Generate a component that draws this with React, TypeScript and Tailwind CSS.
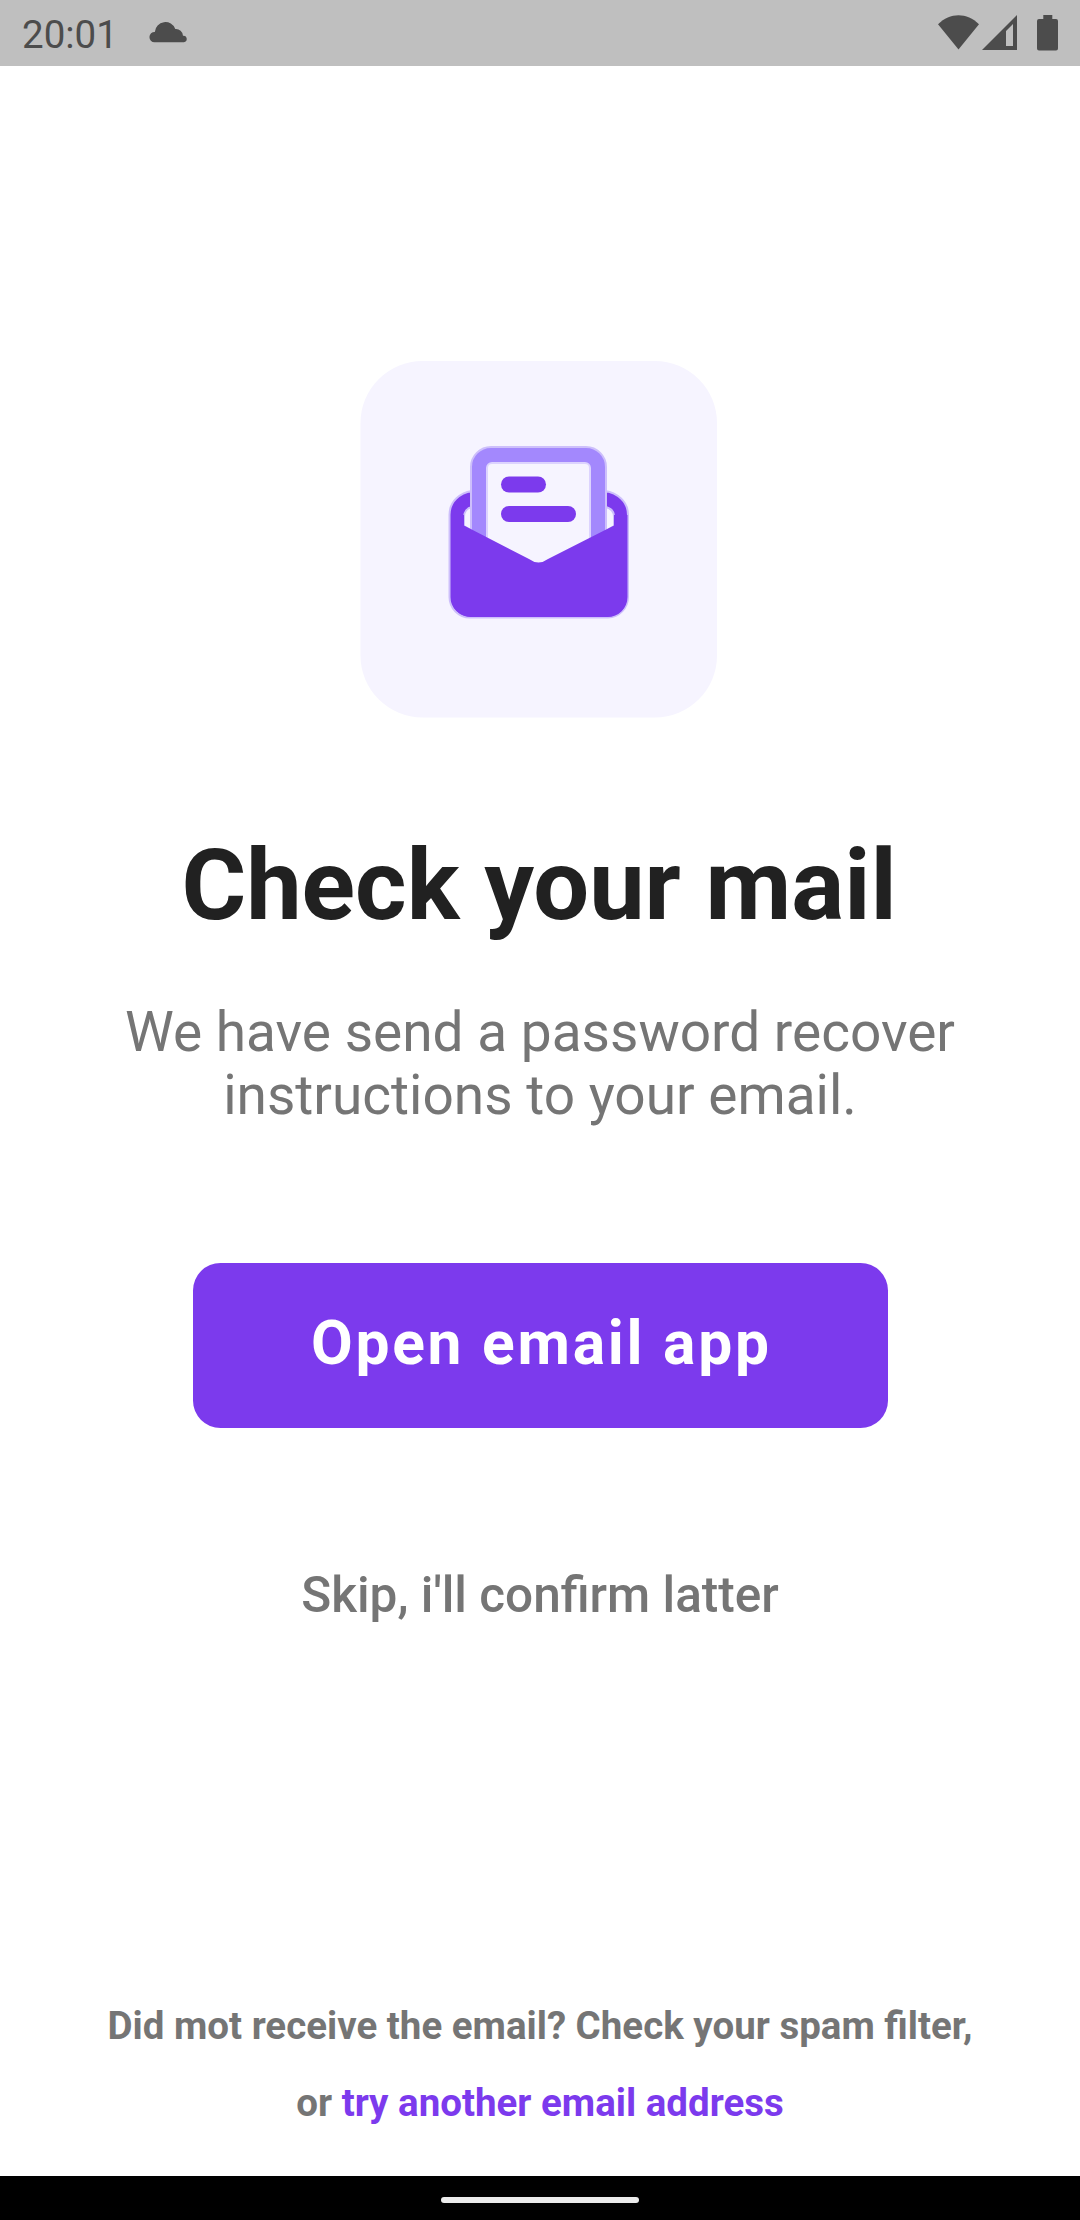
import React from "react";

function StatusBar() {
  return (
    <header className="flex h-[66px] w-full items-center bg-[#bfbfbf] text-[#4c4c4c]">
      <span className="ml-[22px] pt-[4px] text-[38.5px] leading-[66px]">20:01</span>
      <svg className="ml-auto h-[66px] w-[940px] shrink-0" viewBox="140 0 940 66" fill="currentColor">
        <path d="M154.500 42.300a5.200 5.200 0 0 1 .300-10.400A10.600 10.600 0 0 1 175.300 29a7 7 0 0 1 7.700 6.700A3.300 3.300 0 0 1 183.800 42.300Z" />
        <path d="M958.500 49.500 938 24.300C950 12.200 967 12.200 979 24.300Z" />
        <path fillRule="evenodd" d="M982 50 1017 15V50ZM1006 31V46H1013V24Z" />
        <path d="M1043.300 15h9v4h3.700a2 2 0 0 1 2 2v27.500a2 2 0 0 1-2 2h-17a2 2 0 0 1-2-2V21a2 2 0 0 1 2-2h4.300Z" />
      </svg>
    </header>
  );
}

function MailTile() {
  return (
    <svg className="h-[358px] w-[358px] shrink-0" viewBox="360 361 358 358">
      <rect x="360.500" y="361" width="356.500" height="356.500" rx="62" fill="#f6f4ff" />
      {/* envelope back */}
      <path
        d="M472 491C460 493 449.500 501 449.500 515V597A20.500 20.500 0 0 0 470 617.500H608A20.500 20.500 0 0 0 628 597V515C628 501 617 493 605 491V507C611 508 614 512 614 517V526L539 572L464 526V517C464 512 467 508 472 507Z"
        fill="#7c3aed"
        stroke="#cdbffb"
        strokeWidth="2"
      />
      {/* letter */}
      <path
        d="M471 545V467A20 20 0 0 1 491 447H586A20 20 0 0 1 606 467V545Z"
        fill="#a388fd"
        stroke="#cdbffb"
        strokeWidth="2"
      />
      <path d="M487 568V468A5 5 0 0 1 492 463H585A5 5 0 0 1 590 468V568Z" fill="#f6f4ff" stroke="#dcd3fe" strokeWidth="2" />
      {/* envelope front */}
      <path
        d="M451 515H464V525.500L529 559Q538.500 566 548 559L614 525.500V515H627.500V597A20 20 0 0 1 607.500 617H471A20 20 0 0 1 451 597Z"
        fill="#7c3aed"
      />
      <rect x="501" y="476.500" width="45" height="16" rx="8" fill="#7c3aed" />
      <rect x="501" y="506" width="75" height="16" rx="8" fill="#7c3aed" />
    </svg>
  );
}

export default function App() {
  return (
    <div className="flex h-[2220px] w-[1080px] flex-col overflow-hidden bg-white font-['Roboto',sans-serif] text-[#757575]">
      <StatusBar />
      <main className="flex flex-1 flex-col items-center pt-[295px] text-center">
        <div className="flex pr-[2px]">
          <MailTile />
        </div>
        <h1 className="mt-[108px] pr-[2px] text-[99px] leading-[116px] font-bold whitespace-nowrap text-[#212121]">Check your mail</h1>
        <p className="mt-[58px] text-[55px] leading-[63px] whitespace-nowrap">
          We have send a password recover
          <br />
          instructions to your email.
        </p>
        <button className="mt-[135.500px] flex h-[165px] w-[695px] items-start justify-center rounded-[27.500px] bg-[#7c3aed] pt-[46px] pl-[2.750px] text-[60.500px] leading-[70px] font-bold tracking-[2.750px] whitespace-nowrap text-white">
          Open email app
        </button>
        <button className="mt-[138.500px] text-[49.500px] leading-[58px] font-medium whitespace-nowrap">Skip, i'll confirm latter</button>
        <p className="mt-auto mb-[35px] text-[38.500px] leading-[77px] font-bold whitespace-nowrap">
          Did mot receive the email? Check your spam filter,
          <br />
          or <a className="text-[#7c3aed]">try another email address</a>
        </p>
      </main>
      <footer className="flex h-[44px] w-full items-start justify-center bg-black pt-[21px]">
        <div className="h-[6px] w-[198px] rounded-[3px] bg-[#ececec]" />
      </footer>
    </div>
  );
}
